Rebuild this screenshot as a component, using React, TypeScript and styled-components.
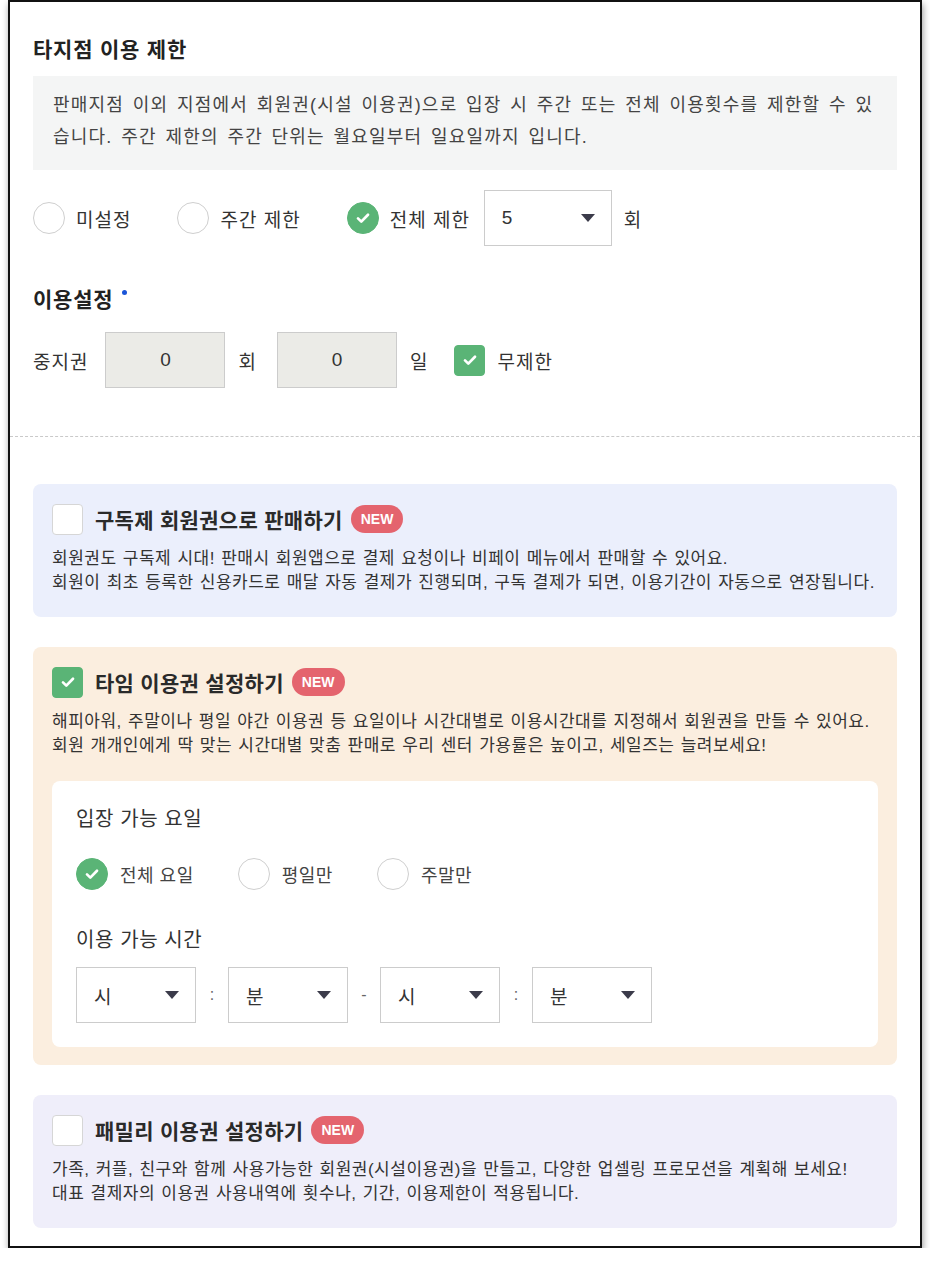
import { FC } from "react";
import styled, { createGlobalStyle } from "styled-components";

const GlobalStyle = createGlobalStyle`
  body {
    margin: 0;
    background: #fff;
    font-family: "Liberation Sans", "Noto Sans CJK KR", sans-serif;
    color: #222;
  }
`;

const CheckMark: FC<{ size?: number }> = ({ size = 18 }) => (
  <svg width={size} height={size} viewBox="0 0 18 18" fill="none">
    <path d="M4 9.4l3.3 3.2L14 5.8" stroke="#fff" strokeWidth="2.7" strokeLinecap="round" strokeLinejoin="round" />
  </svg>
);

const Radio: FC<{ checked?: boolean }> = ({ checked }) => (
  <RadioCircle checked={checked}>{checked && <CheckMark />}</RadioCircle>
);

const Select: FC<{ value: string; width: number }> = ({ value, width }) => (
  <SelectBox style={{ width }}>
    <span>{value}</span>
    <Arrow />
  </SelectBox>
);

const NewBadge: FC = () => <Badge>NEW</Badge>;

const App: FC = () => {
  return (
    <>
      <GlobalStyle />
      <Frame>
        <TopSection>
          <SectionTitle>타지점 이용 제한</SectionTitle>
          <InfoBox>
            판매지점 이외 지점에서 회원권(시설 이용권)으로 입장 시 주간 또는 전체 이용횟수를 제한할 수 있
            <br />
            습니다. 주간 제한의 주간 단위는 월요일부터 일요일까지 입니다.
          </InfoBox>
          <OptionRow $top={20}>
            <RadioItem>
              <Radio />
              <OptionLabel>미설정</OptionLabel>
            </RadioItem>
            <RadioItem>
              <Radio />
              <OptionLabel>주간 제한</OptionLabel>
            </RadioItem>
            <RadioItem $last>
              <Radio checked />
              <OptionLabel>전체 제한</OptionLabel>
            </RadioItem>
            <Select value="5" width={128} />
            <Unit>회</Unit>
          </OptionRow>

          <SectionTitle $spaced>
            이용설정<Required />
          </SectionTitle>
          <OptionRow $top={6}>
            <RowLabel>중지권</RowLabel>
            <NumberBox>0</NumberBox>
            <Unit $right={21}>회</Unit>
            <NumberBox>0</NumberBox>
            <Unit $right={27}>일</Unit>
            <CheckBox checked>
              <CheckMark />
            </CheckBox>
            <OptionLabel>무제한</OptionLabel>
          </OptionRow>
        </TopSection>

        <Features>
          <FeatureBox tone="#ebeffc">
            <FeatureHead>
              <CheckBox />
              <FeatureTitle>구독제 회원권으로 판매하기</FeatureTitle>
              <NewBadge />
            </FeatureHead>
            <FeatureDesc>
              회원권도 구독제 시대! 판매시 회원앱으로 결제 요청이나 비페이 메뉴에서 판매할 수 있어요.
              <br />
              회원이 최초 등록한 신용카드로 매달 자동 결제가 진행되며, 구독 결제가 되면, 이용기간이 자동으로 연장됩니다.
            </FeatureDesc>
          </FeatureBox>

          <FeatureBox tone="#fbeedf">
            <FeatureHead>
              <CheckBox checked>
                <CheckMark />
              </CheckBox>
              <FeatureTitle>타임 이용권 설정하기</FeatureTitle>
              <NewBadge />
            </FeatureHead>
            <FeatureDesc>
              해피아워, 주말이나 평일 야간 이용권 등 요일이나 시간대별로 이용시간대를 지정해서 회원권을 만들 수 있어요.
              <br />
              회원 개개인에게 딱 맞는 시간대별 맞춤 판매로 우리 센터 가용률은 높이고, 세일즈는 늘려보세요!
            </FeatureDesc>
            <InnerCard>
              <CardLabel>입장 가능 요일</CardLabel>
              <CardRadios>
                <RadioItem $small>
                  <Radio checked />
                  <SmallLabel>전체 요일</SmallLabel>
                </RadioItem>
                <RadioItem $small>
                  <Radio />
                  <SmallLabel>평일만</SmallLabel>
                </RadioItem>
                <RadioItem $small>
                  <Radio />
                  <SmallLabel>주말만</SmallLabel>
                </RadioItem>
              </CardRadios>
              <CardLabel $second>이용 가능 시간</CardLabel>
              <TimeRow>
                <Select value="시" width={120} />
                <Sep>:</Sep>
                <Select value="분" width={120} />
                <Sep>-</Sep>
                <Select value="시" width={120} />
                <Sep>:</Sep>
                <Select value="분" width={120} />
              </TimeRow>
            </InnerCard>
          </FeatureBox>

          <FeatureBox tone="#efeefa">
            <FeatureHead>
              <CheckBox />
              <FeatureTitle>패밀리 이용권 설정하기</FeatureTitle>
              <NewBadge />
            </FeatureHead>
            <FeatureDesc>
              가족, 커플, 친구와 함께 사용가능한 회원권(시설이용권)을 만들고, 다양한 업셀링 프로모션을 계획해 보세요!
              <br />
              대표 결제자의 이용권 사용내역에 횟수나, 기간, 이용제한이 적용됩니다.
            </FeatureDesc>
          </FeatureBox>
        </Features>
      </Frame>
    </>
  );
};

export default App;

const Frame = styled.div`
  width: 910px;
  margin-left: 8px;
  border: 2px solid #111;
  background: #fff;
  box-shadow: 1px 4px 7px rgba(0, 0, 0, 0.4);
`;

const TopSection = styled.section`
  display: flex;
  flex-direction: column;
  align-items: stretch;
  padding: 34px 23px 48px;
  border-bottom: 1px dashed #c9c9c9;
`;

const SectionTitle = styled.h2<{ $spaced?: boolean }>`
  align-self: flex-start;
  margin: ${(p) => (p.$spaced ? "40px" : "0")} 0 12px;
  font-size: 21px;
  line-height: 28px;
  letter-spacing: 0.8px;
  font-weight: 700;
  color: #222;
  position: relative;
`;

const Required = styled.span`
  position: absolute;
  right: -14px;
  top: 4px;
  width: 5px;
  height: 5px;
  border-radius: 50%;
  background: #1a55d8;
`;

const InfoBox = styled.div`
  background: #f4f5f5;
  padding: 13px 20px 17px;
  font-size: 18px;
  line-height: 32px;
  letter-spacing: 1.2px;
  word-spacing: 2.5px;
  color: #444;
  white-space: nowrap;
`;

const OptionRow = styled.div<{ $top: number }>`
  display: flex;
  align-items: center;
  height: 56px;
  margin-top: ${(p) => p.$top}px;
`;

const RadioItem = styled.label<{ $last?: boolean; $small?: boolean }>`
  display: flex;
  align-items: center;
  gap: ${(p) => (p.$small ? "12px" : "11px")};
  margin-right: ${(p) => (p.$last ? "14px" : p.$small ? "44px" : "46px")};
`;

const RadioCircle = styled.span<{ checked?: boolean }>`
  box-sizing: border-box;
  flex: none;
  width: 32px;
  height: 32px;
  border-radius: 50%;
  border: 1px solid ${(p) => (p.checked ? "#5ab476" : "#cfcfcf")};
  background: ${(p) => (p.checked ? "#5ab476" : "#fff")};
  display: flex;
  align-items: center;
  justify-content: center;
`;

const OptionLabel = styled.span`
  font-size: 19px;
  letter-spacing: 1px;
  color: #333;
`;

const SmallLabel = styled.span`
  font-size: 18px;
  letter-spacing: 0.5px;
  color: #444;
`;

const SelectBox = styled.div`
  box-sizing: border-box;
  height: 56px;
  border: 1px solid #cccccc;
  background: #fff;
  display: flex;
  align-items: center;
  justify-content: space-between;
  padding: 0 16px 0 17px;
  font-size: 19px;
  color: #333;
`;

const Arrow = styled.span`
  width: 0;
  height: 0;
  border-left: 7px solid transparent;
  border-right: 7px solid transparent;
  border-top: 8px solid #3b3b4a;
`;

const Unit = styled.span<{ $right?: number }>`
  font-size: 19px;
  color: #333;
  margin: 0 ${(p) => p.$right ?? 0}px 0 ${(p) => (p.$right ? 13 : 12)}px;
`;

const RowLabel = styled.span`
  font-size: 19px;
  letter-spacing: 1px;
  color: #333;
  margin-right: 17px;
`;

const NumberBox = styled.div`
  box-sizing: border-box;
  width: 120px;
  height: 56px;
  border: 1px solid #cccccc;
  background: #ebebe7;
  display: flex;
  align-items: center;
  justify-content: center;
  font-size: 19px;
  color: #333;
`;

const CheckBox = styled.span<{ checked?: boolean }>`
  box-sizing: border-box;
  flex: none;
  width: 31px;
  height: 31px;
  border-radius: 4px;
  border: 1px solid ${(p) => (p.checked ? "#5ab476" : "#d6d6d6")};
  background: ${(p) => (p.checked ? "#5ab476" : "#fff")};
  display: flex;
  align-items: center;
  justify-content: center;
  margin-right: 12px;
`;

const Features = styled.div`
  display: flex;
  flex-direction: column;
  gap: 30px;
  padding: 47px 23px 18px;
`;

const FeatureBox = styled.div<{ tone: string }>`
  background: ${(p) => p.tone};
  border-radius: 8px;
  padding: 19px 19px 22px;
`;

const FeatureHead = styled.div`
  display: flex;
  align-items: center;
  height: 32px;
`;

const FeatureTitle = styled.span`
  font-size: 21px;
  letter-spacing: 0.3px;
  font-weight: 700;
  color: #2a2a2a;
  margin-right: 8px;
`;

const Badge = styled.span`
  height: 28px;
  padding: 0 10px;
  border-radius: 14px;
  background: #e4646e;
  color: #fff;
  font-size: 14px;
  font-weight: 700;
  display: flex;
  align-items: center;
`;

const FeatureDesc = styled.p`
  margin: 12px 0 0;
  font-size: 17px;
  line-height: 24px;
  letter-spacing: 0.5px;
  word-spacing: 1px;
  color: #333;
  white-space: nowrap;
`;

const InnerCard = styled.div`
  margin-top: 23px;
  margin-bottom: -4px;
  background: #fff;
  border-radius: 8px;
  padding: 25px 24px 24px;
`;

const CardLabel = styled.div<{ $second?: boolean }>`
  font-size: 20px;
  line-height: 26px;
  letter-spacing: 0.6px;
  color: #333;
  margin-top: ${(p) => (p.$second ? "37px" : "0")};
`;

const CardRadios = styled.div`
  display: flex;
  align-items: center;
  margin-top: 26px;
`;

const TimeRow = styled.div`
  display: flex;
  align-items: center;
  margin-top: 14px;
`;

const Sep = styled.span`
  width: 32px;
  text-align: center;
  font-size: 16px;
  color: #666;
`;
